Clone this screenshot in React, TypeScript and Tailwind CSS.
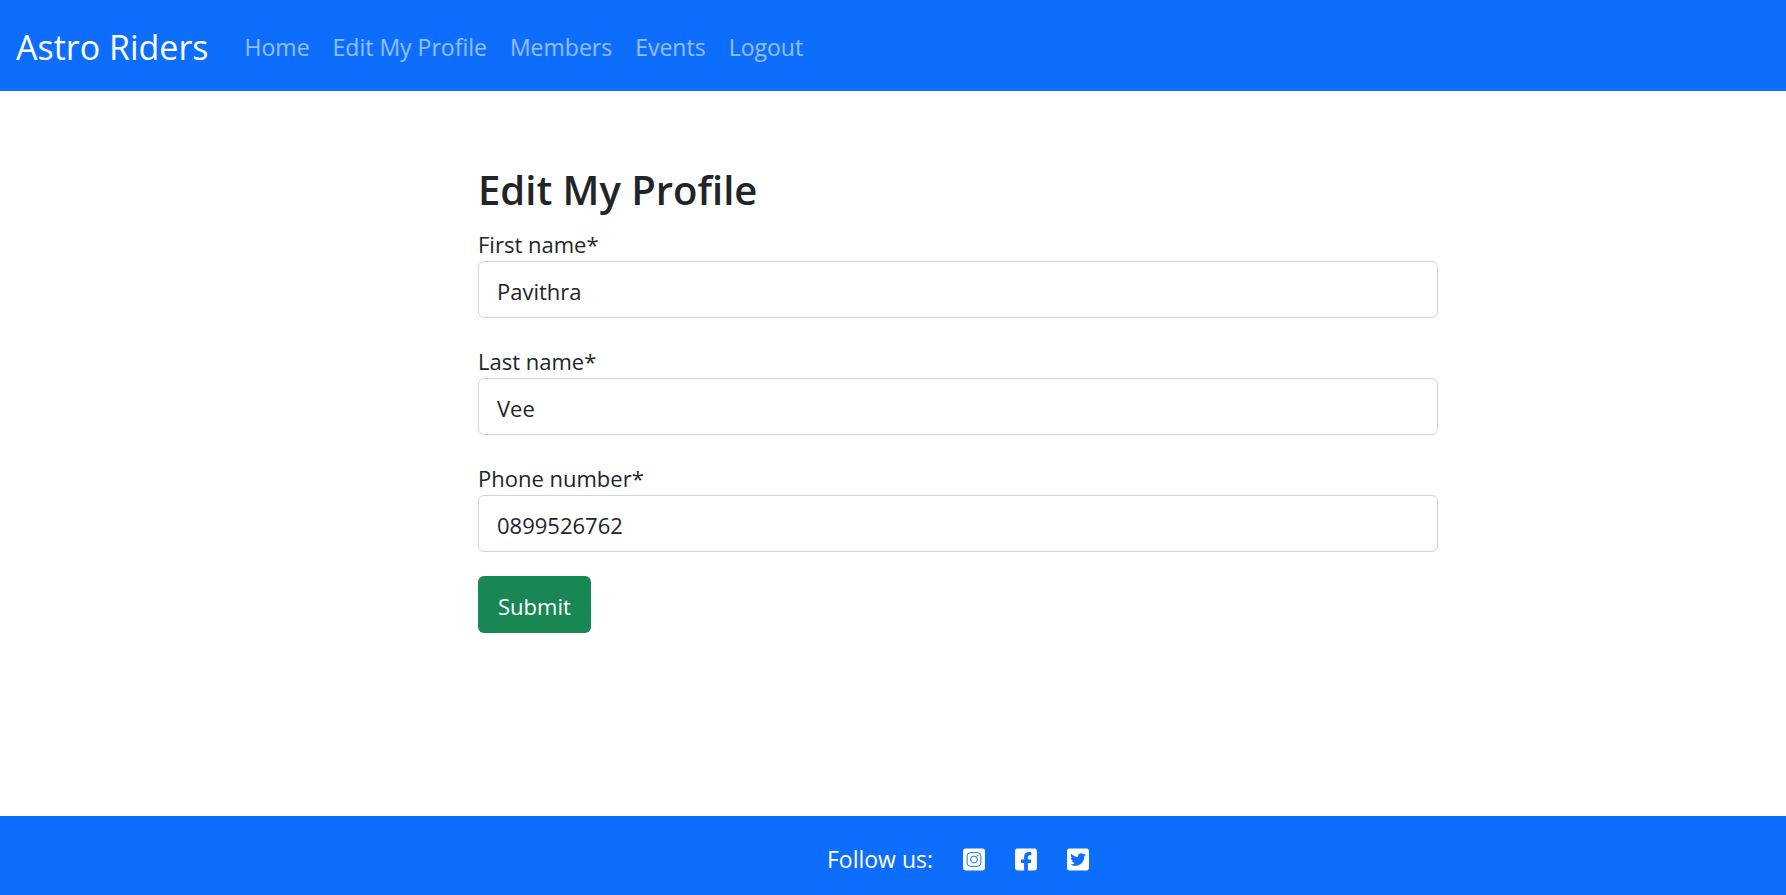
import { useState } from 'react';
import { FaFacebookSquare, FaTwitterSquare } from 'react-icons/fa';

const links = [
  { label: 'Home', href: '#home' },
  { label: 'Edit My Profile', href: '#profile' },
  { label: 'Members', href: '#members' },
  { label: 'Events', href: '#events' },
  { label: 'Logout', href: '#logout' },
];

function InstagramSquare({ className }: { className?: string }) {
  return (
    <svg viewBox="0 0 448 512" className={className} aria-hidden="true">
      <rect x="0" y="32" width="448" height="448" rx="48" fill="currentColor" />
      <g fill="none" stroke="#0d6efd" strokeWidth="20">
        <rect x="83" y="115" width="282" height="282" rx="72" />
        <circle cx="224" cy="256" r="70" />
      </g>
      <circle cx="300" cy="180" r="16" fill="#0d6efd" />
    </svg>
  );
}

const socials = [
  { label: 'Instagram', href: '#instagram', Icon: InstagramSquare },
  { label: 'Facebook', href: '#facebook', Icon: FaFacebookSquare },
  { label: 'Twitter', href: '#twitter', Icon: FaTwitterSquare },
];

function Field({ id, label, initial, type = 'text' }: { id: string; label: string; initial: string; type?: string }) {
  const [value, setValue] = useState(initial);
  return (
    <div>
      <label htmlFor={id} className="block pt-0.5 leading-[34px]">
        {label}*
      </label>
      <input
        id={id}
        type={type}
        required
        value={value}
        onChange={(e) => setValue(e.target.value)}
        className="block h-[57px] w-full rounded-md border border-[#ced4da] bg-white px-[18px] pt-0.5 text-[#212529] outline-none focus:border-[#86b7fe]"
      />
    </div>
  );
}

export default function App() {
  return (
    <div className="flex min-h-screen flex-col bg-white font-['Open_Sans',sans-serif] text-[22px] text-[#212529]">
      <header className="bg-[#0d6efd] px-4 pt-[22px] pb-[18px]">
        <nav className="flex flex-wrap items-center gap-x-9">
          <a href="#home" className="text-[34px] leading-[51px] text-white">
            Astro Riders
          </a>
          <ul className="flex flex-wrap items-center gap-x-[23px] text-[23px]">
            {links.map(({ label, href }) => (
              <li key={label}>
                <a href={href} className="text-white/55 hover:text-white/75">
                  {label}
                </a>
              </li>
            ))}
          </ul>
        </nav>
      </header>

      <main className="flex-1 pt-[74px] pl-[130px]">
        <form className="mx-auto max-w-[960px]" onSubmit={(e) => e.preventDefault()}>
          <h1 className="mb-2.5 text-[40px] leading-[50px] font-semibold">Edit My Profile</h1>
          <div className="flex flex-col gap-6">
            <Field id="first-name" label="First name" initial="Pavithra" />
            <Field id="last-name" label="Last name" initial="Vee" />
            <Field id="phone-number" label="Phone number" initial="0899526762" type="tel" />
          </div>
          <button type="submit" className="mt-6 h-[57px] rounded-md bg-[#198754] px-5 pt-1 text-white hover:bg-[#157347]">
            Submit
          </button>
        </form>
      </main>

      <footer className="flex h-[79px] items-center justify-center gap-[30px] bg-[#0d6efd] pt-2 pl-[130px] text-[23px] text-white">
        <span>Follow us:</span>
        {socials.map(({ label, href, Icon }) => (
          <a key={label} href={href} aria-label={label}>
            <Icon className="h-[25px] w-[22px]" />
          </a>
        ))}
      </footer>
    </div>
  );
}
